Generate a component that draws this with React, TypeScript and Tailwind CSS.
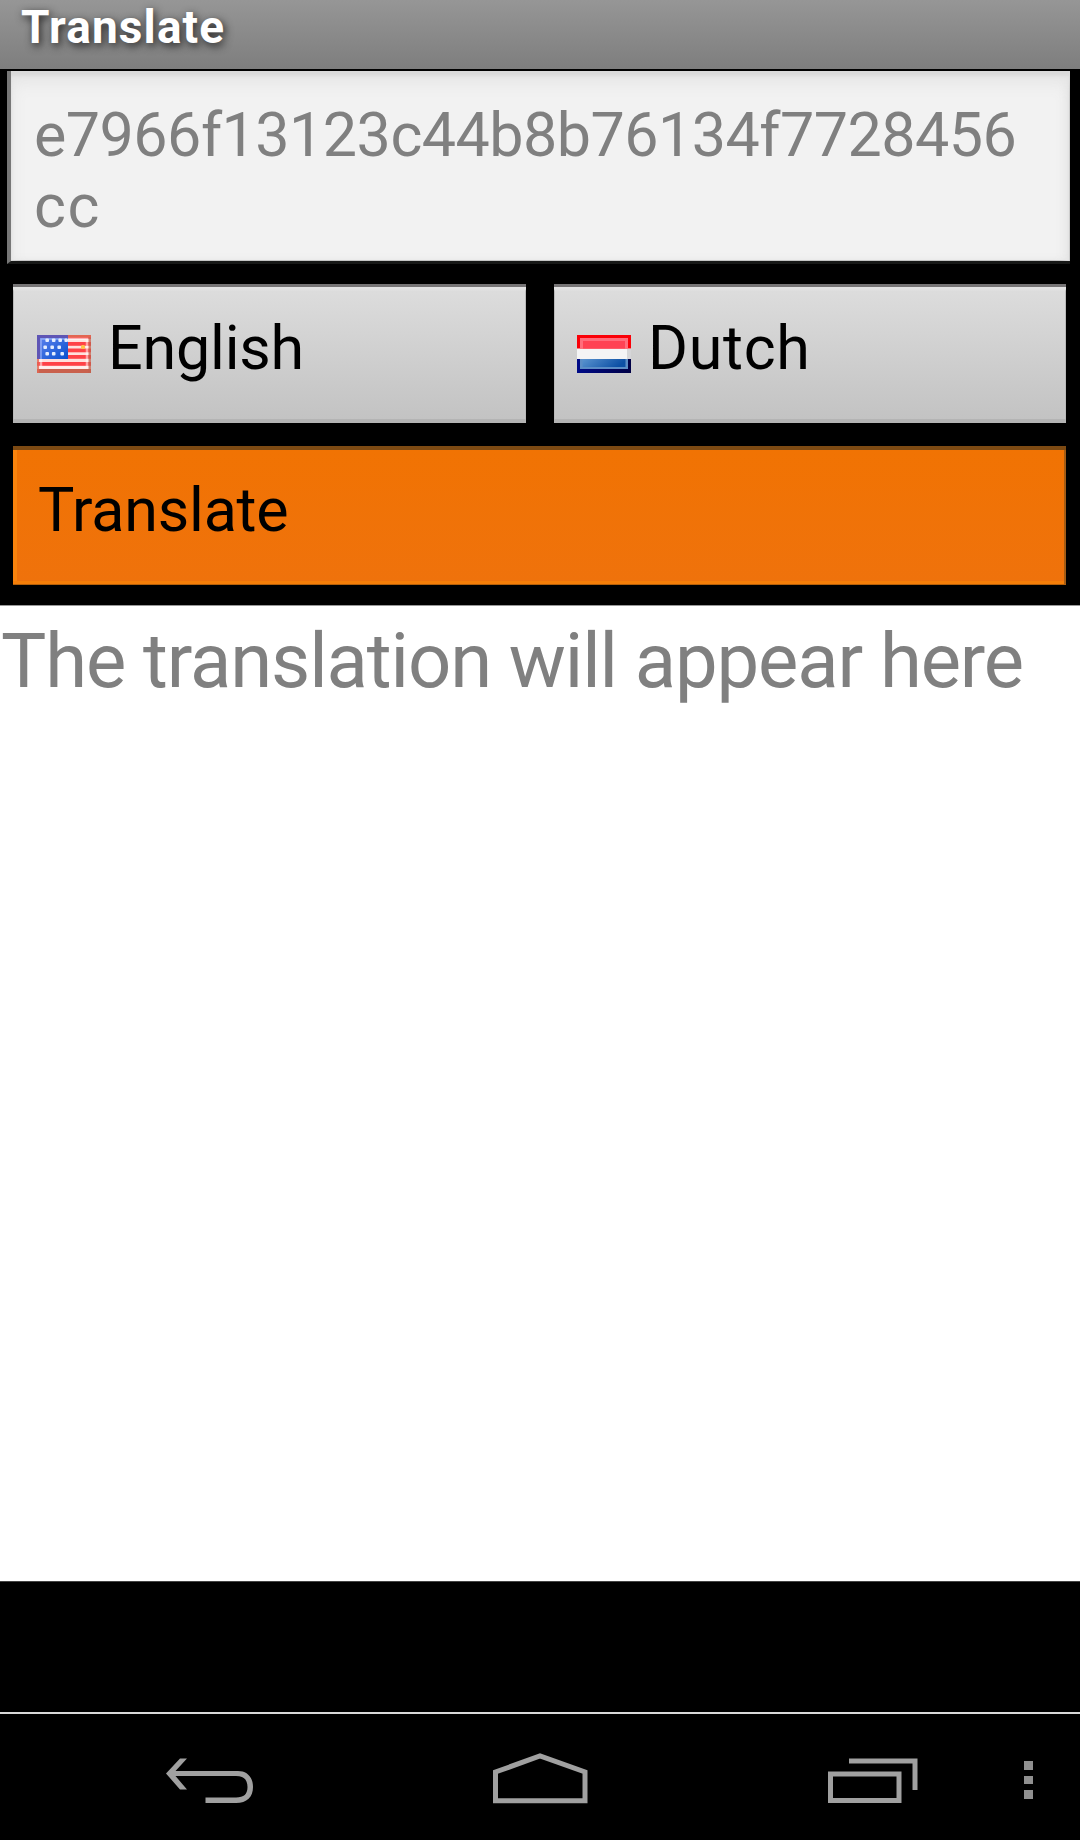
import type { ReactNode } from "react";

function UsFlag() {
  const stars = [
    [10, 5], [16.5, 5], [23, 5], [29, 5],
    [8, 12], [15, 12], [22, 12],
    [10, 18.5], [16.5, 18.5], [25, 18.5],
  ];
  return (
    <svg width="54" height="38" viewBox="0 0 54 38">
      <defs>
        <linearGradient id="canton" x1="0" y1="0" x2="1" y2="1">
          <stop offset="0" stopColor="#6487f0" />
          <stop offset="1" stopColor="#0a50cf" />
        </linearGradient>
      </defs>
      <rect width="54" height="38" fill="#ffe0dc" />
      {[0, 7, 13.5, 20, 27].map((y) => (
        <rect key={y} y={y} width="54" height="3.8" fill="#ff4247" />
      ))}
      <rect y="34" width="54" height="4" fill="#c9614d" />
      <rect x="51.5" width="2.5" height="38" fill="#c0614d" opacity=".75" />
      <rect width="54" height="2.5" fill="#e26652" />
      <rect width="2" height="38" fill="#e26652" opacity=".8" />
      <rect x="4" y="4" width="46" height="28.5" fill="none" stroke="#fff" strokeWidth="2.5" opacity=".5" />
      <rect width="31" height="24" fill="url(#canton)" />
      <path d="M1.5 24V1.5H31" fill="none" stroke="#5e55b5" strokeWidth="3" />
      <path d="M4 24V4H30" fill="none" stroke="#bccaff" strokeWidth="1.5" opacity=".6" />
      {stars.map(([x, y]) => (
        <rect key={`${x}-${y}`} x={x - 1.6} y={y - 1.5} width="3.6" height="3.4" rx="1" fill="#e4edff" />
      ))}
      <rect x="44" y="10" width="4" height="4" rx="1.5" fill="#ffc247" />
    </svg>
  );
}

function NlFlag() {
  return (
    <svg width="54" height="38" viewBox="0 0 54 38">
      <defs>
        <linearGradient id="nlblue" x1="0" y1="0" x2="1" y2=".25">
          <stop offset="0" stopColor="#5a93cf" />
          <stop offset="1" stopColor="#0c50a5" />
        </linearGradient>
        <linearGradient id="nlnavy" x1="0" y1="0" x2="1" y2="0">
          <stop offset="0" stopColor="#000b88" />
          <stop offset="1" stopColor="#000045" />
        </linearGradient>
      </defs>
      <rect width="54" height="14" fill="#fa0008" />
      <rect y="13.5" width="54" height="11" fill="#f4f4f5" />
      <rect x="50" y="14" width="4" height="10" fill="#d6d6d8" />
      <rect y="24" width="54" height="14" fill="url(#nlnavy)" />
      <rect x="3" y="3" width="48" height="10.5" fill="#ff6d7c" />
      <rect x="6" y="6" width="42" height="7.5" fill="#ff4254" />
      <rect x="3" y="24" width="48" height="10" fill="#5b8dc6" />
      <rect x="5.5" y="24" width="43" height="8" fill="url(#nlblue)" />
    </svg>
  );
}

function LanguageButton({ flag, label, className }: { flag: ReactNode; label: string; className: string }) {
  return (
    <button
      className={`flex h-[139px] items-start border-t-[3px] border-[#777576] bg-linear-to-b from-[#dddddd] to-[#c2c2c2] pt-[48px] text-left shadow-[inset_0_-4px_0_#b4b4b4,inset_0_3px_2px_#e3e3e3,inset_1px_0_0_#aaaaaa,inset_-1px_0_0_#aaaaaa] ${className}`}
    >
      {flag}
      <span className="-mt-[23px] ml-[17px] text-[61px] leading-[72px]">{label}</span>
    </button>
  );
}

export default function App() {
  return (
    <div className="flex h-[1840px] w-[1080px] flex-col overflow-hidden bg-black font-[Roboto,sans-serif] text-black">
      <header className="h-[69px] shrink-0 bg-linear-to-b from-[#969696] to-[#7e7e7e] pl-[21px]">
        <h1 className="text-[46px] leading-[54px] font-bold tracking-[1.1px] text-white [text-shadow:2px_3px_9px_#222]">
          Translate
        </h1>
      </header>

      <div className="mx-[7px] mt-[2px] h-[193px] w-[1063px] shrink-0 border-b-[3px] border-l-4 border-b-[#171817] border-l-[#777] bg-[#f2f2f2] pl-[23px] pt-[29px] text-[61px] leading-[71px] text-[#808080] shadow-[inset_0_5px_3px_#dadada,inset_0_12px_16px_#e5e5e5,inset_-1px_0_0_#aaa,inset_-3px_0_8px_#e4e4e4,inset_0_-1px_0_#aaa]">
        <p className="tracking-[-0.52px]">e7966f13123c44b8b76134f7728456</p>
        <p className="tracking-[1.5px]">cc</p>
      </div>

      <div className="mt-5 ml-[13px] grid shrink-0 grid-cols-[513px_512px] gap-7">
        <LanguageButton flag={<UsFlag />} label="English" className="pl-6 tracking-[-0.2px]" />
        <LanguageButton flag={<NlFlag />} label="Dutch" className="pl-[23px] tracking-[0.7px]" />
      </div>

      <button className="mt-[23px] ml-[13px] flex h-[139px] w-[1053px] shrink-0 items-start border-t-4 border-[#7d4a13] bg-linear-to-b from-[#f17303] to-[#ef720c] pl-[25px] pt-6 text-left text-[61px] leading-[72px] tracking-[-0.2px] shadow-[inset_0_-1px_0_#b5600a,inset_-2px_0_0_#a65c13,inset_0_-4px_0_#f57e08,inset_4px_0_0_#f9830d]">
        Translate
      </button>

      <main className="mt-5 h-[976px] shrink-0 border-t border-[#999] bg-white pt-[11px] pl-px text-[76px] leading-[88px] tracking-[-1.1px] text-[#808080]">
        <p className="whitespace-nowrap">The translation will appear here</p>
      </main>

      <div className="h-[131px] shrink-0 border-t border-[#444]" />

      <nav className="flex flex-1 items-start border-t-2 border-[#d8d8d8] text-[#a0a0a0]">
        <svg className="mt-[44px] ml-[166px]" width="88" height="46" viewBox="0 0 88 46" fill="none">
          <path d="M14 0.5H21L9.5 13H72C81 13 87 19 87 29S81 45 70 45H39.5V39.5H70C78 39.5 81.5 36 81.5 29S78 18 70 18H9.5L21 31.5H14L0 15.5Z" fill="currentColor" />
        </svg>
        <svg className="mt-[39px] ml-[239px]" width="95" height="51" viewBox="0 0 95 51" fill="none">
          <path d="M2.5 47.8V19L47 3L92 19V47.8Z" stroke="currentColor" strokeWidth="5" />
        </svg>
        <svg className="mt-[44px] ml-[240px]" width="90" height="46" viewBox="0 0 90 46" fill="none" stroke="currentColor" strokeWidth="5">
          <path d="M2.5 16H71V42.5H2.5ZM21 3H87V32" />
        </svg>
        <div className="mt-[47px] ml-[106px] flex flex-col gap-[6px]">
          <i className="h-[8.5px] w-[9px] bg-[#909090]" />
          <i className="h-[8.5px] w-[9px] bg-[#909090]" />
          <i className="h-[8.5px] w-[9px] bg-[#909090]" />
        </div>
      </nav>
    </div>
  );
}
